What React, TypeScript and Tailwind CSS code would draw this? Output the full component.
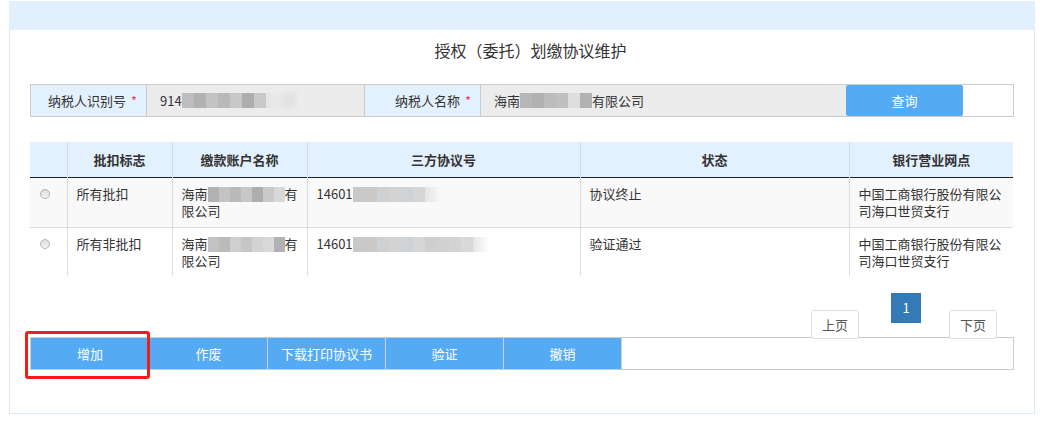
import React from "react";

const font = "font-['Noto_Sans_CJK_SC','Noto_Sans',sans-serif]";

// pixelated blur used to hide private data
function Mosaic({ cells, fade = 0, small = false }: { cells: string[]; fade?: number; small?: boolean }) {
  return (
    <span className="inline-flex h-[15px] align-[-3px] blur-[0.6px]">
      {cells.map((c, i) => (
        <span key={i} className={`${small ? "w-[11px]" : "w-[12px]"} h-full ${c}`} />
      ))}
      {fade > 0 && (
        <span className="w-[16px] h-full bg-gradient-to-r from-[#e4e4e4] to-transparent" />
      )}
    </span>
  );
}

const g1 = ["bg-[#bdbdbd]", "bg-[#b2b2b2]", "bg-[#c3c3c3]", "bg-[#b9b9b9]", "bg-[#c7c7c7]", "bg-[#aeaeae]", "bg-[#c9c9c9]", "bg-[#d8d8d8]"];
const g2 = ["bg-[#c2c2c2]", "bg-[#bababa]", "bg-[#cfcfcf]", "bg-[#c6c6c6]", "bg-[#d3d3d3]", "bg-[#d9d9d9]", "bg-[#b3b1b3]"];
const g3 = ["bg-[#c8c8c8]", "bg-[#cbc9c6]", "bg-[#cfd0d2]", "bg-[#d3d3d3]", "bg-[#cdd3d6]", "bg-[#d6d6d6]", "bg-[#cfcfcf]", "bg-[#d1d1d1]", "bg-[#d4d4d4]", "bg-[#d9d9d9]"];
const g4 = ["bg-[#b7b7b7]", "bg-[#b1b1b1]", "bg-[#bcbcbc]", "bg-[#c0c0c0]", "bg-[#dedede]", "bg-[#b3b1b3]"];

function Radio() {
  return (
    <span className="block w-[10px] h-[10px] ml-[10px] rounded-full border border-[#b5b5b5] bg-gradient-to-b from-[#dcdcdc] to-[#f4f4f4]" />
  );
}

const rows = [
  { flag: "所有批扣", name: g1.slice(1, 8), agree: g3.slice(0, 6), status: "协议终止", bg: "bg-[#f9f9f9]", h: "h-[50px]" },
  { flag: "所有非批扣", name: g2, agree: g3, status: "验证通过", bg: "bg-white", h: "h-[49px]" },
];

const actions = ["增加", "作废", "下载打印协议书", "验证", "撤销"];

export default function App() {
  return (
    <div className={`w-[1040px] h-[422px] bg-white text-[13px] text-[#333] ${font}`}>
      <div className="ml-[9px] pt-[1px] w-[1026px]">
        <div className="h-[29px] bg-[#e2effd]" />
        <div className="h-[384px] border-x border-b border-[#dceaf8] px-[20px]">
          {/* title */}
          <div className="h-[40px] flex items-center justify-center pl-[17px] text-[16px] text-[#333]">
            授权（委托）划缴协议维护
          </div>

          {/* search row */}
          <div className="mt-[14px] flex h-[33px] border border-[#cccccc]">
            <div className="w-[116px] bg-[#e3f0fd] flex items-center justify-end pr-[9px] border-r border-[#cccccc]">
              纳税人识别号<span className="ml-[5px] text-[#ef4166]">*</span>
            </div>
            <div className="w-[218px] bg-[#ececec] flex items-center pl-[13px] border-r border-[#cccccc]">
              914
              <Mosaic cells={g1.slice(0, 7)} fade={1} />
              <span className="w-[14px] h-[15px] bg-[#e2e2e2] blur-[2px]" />
            </div>
            <div className="w-[116px] bg-[#e3f0fd] flex items-center justify-end pr-[9px] border-r border-[#cccccc]">
              纳税人名称<span className="ml-[5px] text-[#ef4166]">*</span>
            </div>
            <div className="w-[365px] bg-[#ececec] flex items-center pl-[13px]">
              海南
              <Mosaic cells={g4} />
              有限公司
            </div>
            <button className="w-[117px] bg-[#55abf3] text-white rounded-[2px] text-[13px]">查询</button>
            <div className="flex-1 bg-white" />
          </div>

          {/* table */}
          <table className="mt-[25px] w-[983px] table-fixed border-collapse">
            <colgroup>
              <col className="w-[37px]" />
              <col className="w-[105px]" />
              <col className="w-[135px]" />
              <col className="w-[273px]" />
              <col className="w-[269px]" />
              <col className="w-[164px]" />
            </colgroup>
            <thead>
              <tr className="h-[35px] bg-[#e3f0fd] border-b border-[#222]">
                <th className="p-0" />
                <th className="font-bold border-l border-[#d5dde5]">批扣标志</th>
                <th className="font-bold border-l border-[#d5dde5]">缴款账户名称</th>
                <th className="font-bold border-l border-[#d5dde5]">三方协议号</th>
                <th className="font-bold border-l border-[#d5dde5]">状态</th>
                <th className="font-bold border-l border-[#d5dde5]">银行营业网点</th>
              </tr>
            </thead>
            <tbody>
              {rows.map((r, i) => (
                <tr key={i} className={`${r.h} ${r.bg} ${i === 0 ? "border-b border-[#dddddd]" : ""} align-top leading-[17px]`}>
                  <td className="pt-[11px]">
                    <Radio />
                  </td>
                  <td className="border-l border-[#dddddd] pt-[7px] pl-[9px]">{r.flag}</td>
                  <td className="border-l border-[#dddddd] pt-[7px] pl-[9px] whitespace-nowrap">
                    海南
                    <Mosaic cells={r.name} small />
                    有
                    <br />
                    限公司
                  </td>
                  <td className="border-l border-[#dddddd] pt-[7px] pl-[9px] whitespace-nowrap">
                    14601
                    <Mosaic cells={r.agree} fade={1} />
                  </td>
                  <td className="border-l border-[#dddddd] pt-[7px] pl-[9px]">{r.status}</td>
                  <td className="border-l border-[#dddddd] pt-[7px] pl-[9px]">
                    中国工商银行股份有限公
                    <br />
                    司海口世贸支行
                  </td>
                </tr>
              ))}
            </tbody>
          </table>

          {/* pagination */}
          <div className="mt-[17px] flex justify-end pr-[17px] relative z-10">
            <button className="mt-[17px] w-[48px] h-[29px] bg-white border border-[#dddddd] rounded-[3px] text-[#555]">上页</button>
            <span className="ml-[32px] w-[30px] h-[30px] bg-[#337ab7] text-white flex items-center justify-center">1</span>
            <button className="ml-[28px] mt-[17px] w-[48px] h-[29px] bg-white border border-[#dddddd] rounded-[3px] text-[#555]">下页</button>
          </div>

          {/* action bar */}
          <div className="relative mt-[-2px]">
            <div className="flex h-[33px] border border-[#cccccc]">
              {actions.map((a, i) => (
                <button
                  key={a}
                  className={`w-[118px] bg-[#55abf3] text-white text-[13px] ${i > 0 ? "border-l border-[#cfd3d7]" : ""}`}
                >
                  {a}
                </button>
              ))}
              <div className="flex-1 bg-white border-l border-[#cccccc]" />
            </div>
            <div className="absolute left-[-5px] top-[-6px] w-[125px] h-[48px] border-[3px] border-[#f21d17] rounded-[3px]" />
          </div>
        </div>
      </div>
    </div>
  );
}
